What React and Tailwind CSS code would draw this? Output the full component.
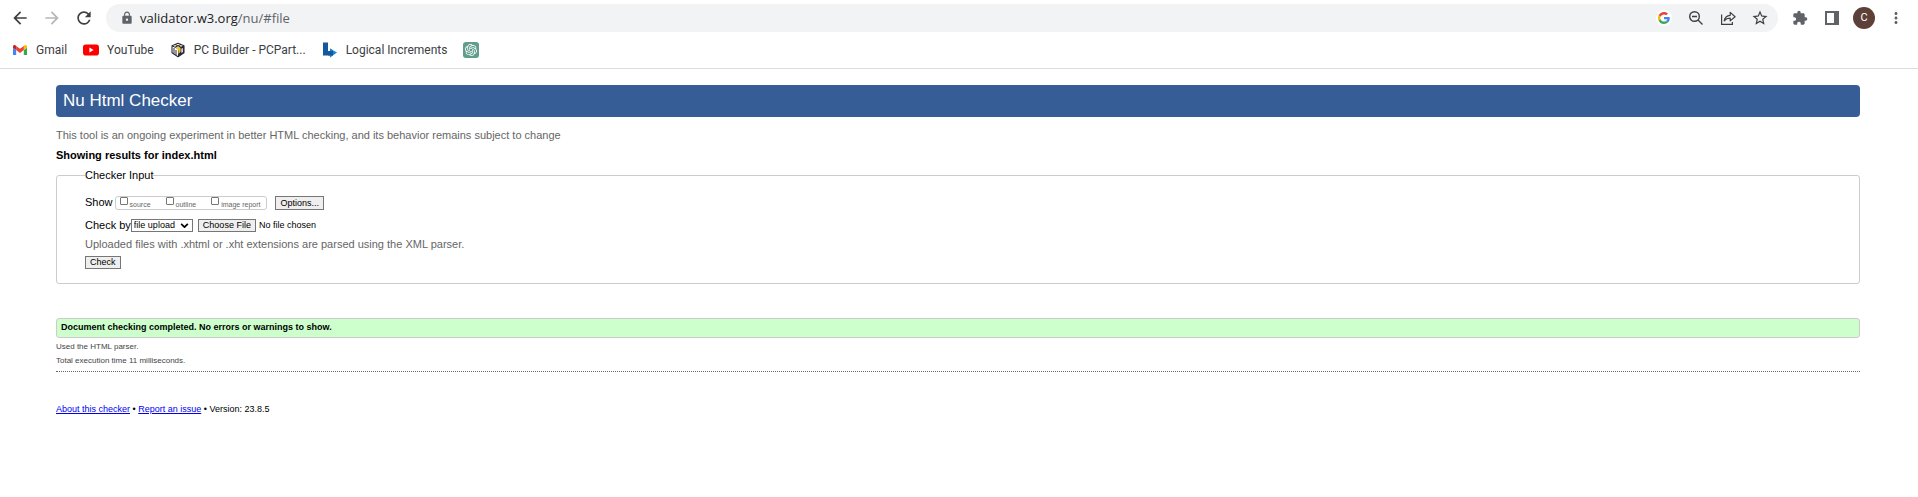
import { MdArrowBack, MdArrowForward, MdRefresh, MdLock, MdStarBorder, MdExtension, MdMoreVert } from "react-icons/md";
import { SiOpenai } from "react-icons/si";

function GoogleIcon() {
  return (
    <svg viewBox="0 0 48 48" className="size-3">
      <path fill="#EA4335" d="M24 9.5c3.54 0 6.71 1.22 9.21 3.6l6.85-6.85C35.9 2.38 30.47 0 24 0 14.62 0 6.51 5.38 2.56 13.22l7.98 6.19C12.43 13.72 17.74 9.5 24 9.5z" />
      <path fill="#4285F4" d="M46.98 24.55c0-1.57-.15-3.09-.38-4.55H24v9.02h12.94c-.58 2.96-2.26 5.48-4.78 7.18l7.73 6c4.51-4.18 7.09-10.36 7.09-17.65z" />
      <path fill="#FBBC05" d="M10.53 28.59c-.48-1.45-.76-2.99-.76-4.59s.27-3.14.76-4.59l-7.98-6.19C.92 16.46 0 20.12 0 24c0 3.88.92 7.54 2.56 10.78l7.97-6.19z" />
      <path fill="#34A853" d="M24 48c6.48 0 11.93-2.13 15.89-5.81l-7.73-6c-2.15 1.45-4.92 2.3-8.16 2.3-6.26 0-11.57-4.22-13.47-9.91l-7.98 6.19C6.51 42.62 14.62 48 24 48z" />
    </svg>
  );
}

function ZoomOutIcon() {
  return (
    <svg viewBox="0 0 16 16" className="size-4" fill="none" stroke="#3c4043" strokeWidth="1.4">
      <circle cx="6.5" cy="6.5" r="4.8" />
      <path d="M4 6.5h5M10 10l4.5 4.5" />
    </svg>
  );
}

function ShareIcon() {
  return (
    <svg viewBox="0 0 16 16" className="size-4" fill="none" stroke="#3c4043" strokeWidth="1.2">
      <path d="M1.6 4.5v9.9h10.8V12" />
      <path d="M4.2 10.8c.6-3.4 2.6-5.3 6-5.5V2.4l4.9 4.3-4.9 4.2V8.2c-2.5 0-4.5.8-6 2.6z" strokeLinejoin="round" />
    </svg>
  );
}

function SidePanelIcon() {
  return (
    <svg viewBox="0 0 14 14" className="size-3.5">
      <path fill="#5f6368" fillRule="evenodd" d="M0 0h14v14H0zM2 2v10h7V2z" />
    </svg>
  );
}

function GmailIcon() {
  return (
    <svg viewBox="52 42 88 66" className="w-3.5">
      <path fill="#4285f4" d="M58 108h14V74L52 59v43c0 3.32 2.69 6 6 6" />
      <path fill="#34a853" d="M120 108h14c3.32 0 6-2.69 6-6V59l-20 15" />
      <path fill="#fbbc04" d="M120 48v26l20-15v-8c0-7.42-8.47-11.65-14.4-7.2" />
      <path fill="#ea4335" d="M72 74V48l24 18 24-18v26L96 92" />
      <path fill="#c5221f" d="M52 51v8l20 15V48l-5.6-4.2c-5.94-4.45-14.4-.22-14.4 7.2" />
    </svg>
  );
}

function YouTubeIcon() {
  return (
    <svg viewBox="0 0 16 12" className="w-4">
      <rect y="0.5" width="16" height="11" rx="2.8" fill="#f00" />
      <path fill="#fff" d="M6.4 3.6v4.8L10.6 6z" />
    </svg>
  );
}

function PartsIcon() {
  return (
    <svg viewBox="0 0 16 16" className="size-4">
      <path d="M8 1.2l6 2.6v7L8 14.8l-6-4v-7z" fill="#fff" stroke="#2b2b38" strokeWidth="1.1" strokeLinejoin="round" />
      <path d="M8 6.6v8.2l6-4v-7z" fill="#2b2b38" />
      <path d="M2 3.8l6 2.8 6-2.8M5 2.5l6 2.7M11 2.5L5 5.2M4 6v5.5M6 8v5" fill="none" stroke="#2b2b38" />
      <path d="M5.2 5.8l3-1.3 2.4 1.4v3.6L8.4 12V8.200z" fill="#f2c12e" />
      <path d="M11.4 6.8l1.4-.7v4l-1.4.9z" fill="#fff" />
    </svg>
  );
}

function IncrementsIcon() {
  return (
    <svg viewBox="0 0 16 16" className="size-4">
      <path fill="#14599d" d="M1 .5h5V9h2V6.5l3 1.700v4.300L8 15.500v-2H1z" />
      <path fill="#1d87d6" d="M8 6.500l7 4-7 5z" />
      <path fill="#14599d" d="M6 9h5v4.500H6z" />
    </svg>
  );
}

function ToolButton({ label, children }) {
  return (
    <button type="button" aria-label={label} className="flex h-7 w-8 items-center justify-center">
      {children}
    </button>
  );
}

function Bookmark({ icon, children, label }) {
  return (
    <a href="#bookmark" aria-label={label} className="flex items-center gap-2">
      <span className="flex size-4 items-center justify-center">{icon}</span>
      {children}
    </a>
  );
}

function ShowOption({ children }) {
  return (
    <label className="flex h-3 items-start gap-0.5">
      <input type="checkbox" className="size-2 appearance-none rounded-[1px] border border-[#767676] bg-white checked:bg-blue-600" />
      <span className="self-end text-[7px] leading-[8px] text-[#666]">{children}</span>
    </label>
  );
}

const buttonClass = "border border-[#767676] bg-[#efefef] px-1 text-[9px] text-black";

export default function App() {
  return (
    <div className="bg-white font-['Liberation_Sans',Arial,sans-serif] text-[11px] leading-4 text-black">
      <header className="border-b border-[#dadce0] font-['Open_Sans','Noto_Sans',sans-serif]">
        <div className="flex items-center pt-1 pr-1.5 pl-1">
          <nav aria-label="History" className="flex">
            <ToolButton label="Back"><MdArrowBack className="size-5 text-[#3c4043]" /></ToolButton>
            <ToolButton label="Forward"><MdArrowForward className="size-5 text-[#b4b6b9]" /></ToolButton>
            <ToolButton label="Reload"><MdRefresh className="size-5 text-[#3c4043]" /></ToolButton>
          </nav>
          <div className="ml-1.5 flex h-7 flex-1 items-center rounded-full bg-[#f1f3f4] pr-0.5 pl-3.5">
            <MdLock className="mr-1.5 size-3.5 text-[#5f6368]" />
            <p className="flex-1 text-[13px] text-[#5f6368]"><span className="text-[#202124]">validator.w3.org</span>/nu/#file</p>
            <ToolButton label="Search with Google">
              <span className="flex size-4 items-center justify-center rounded-full bg-white"><GoogleIcon /></span>
            </ToolButton>
            <ToolButton label="Zoom"><ZoomOutIcon /></ToolButton>
            <ToolButton label="Share"><ShareIcon /></ToolButton>
            <ToolButton label="Bookmark this page"><MdStarBorder className="size-[18px] text-[#3c4043]" /></ToolButton>
          </div>
          <div className="ml-1.5 flex">
            <ToolButton label="Extensions"><MdExtension className="size-4 text-[#5f6368]" /></ToolButton>
            <ToolButton label="Side panel"><SidePanelIcon /></ToolButton>
            <ToolButton label="Profile">
              <span className="flex size-[22px] items-center justify-center rounded-full bg-[#5d4037] font-[Roboto,sans-serif] text-[11px] text-white">C</span>
            </ToolButton>
            <ToolButton label="Menu"><MdMoreVert className="size-[18px] text-[#5f6368]" /></ToolButton>
          </div>
        </div>
        <nav aria-label="Bookmarks" className="flex h-9 items-center gap-4 px-3 font-[Roboto,sans-serif] text-[12px] text-[#3c4043]">
          <Bookmark icon={<GmailIcon />}>Gmail</Bookmark>
          <Bookmark icon={<YouTubeIcon />}>YouTube</Bookmark>
          <Bookmark icon={<PartsIcon />}>PC Builder - PCPart...</Bookmark>
          <Bookmark icon={<IncrementsIcon />}>Logical Increments</Bookmark>
          <Bookmark
            label="ChatGPT"
            icon={<span className="flex size-4 items-center justify-center rounded-[3px] bg-[#5f9e8c]"><SiOpenai className="size-3 text-white" /></span>}
          />
        </nav>
      </header>

      <main className="pt-4 pr-[58px] pl-14">
        <h1 className="rounded bg-[#365d95] px-[7px] text-[17px] leading-8 text-white">Nu Html Checker</h1>
        <p className="mt-2.5 text-[#666]">This tool is an ongoing experiment in better HTML checking, and its behavior remains subject to change</p>
        <h2 className="mt-1 font-bold">Showing results for index.html</h2>

        <form>
          <fieldset className="mt-1 rounded-[3px] border border-[#ccc] px-7 pb-3.5">
            <legend>Checker Input</legend>
            <div className="mt-[13px] flex h-3.5 items-start leading-3">
              <span>Show</span>
              <div className="ml-0.5 flex h-3.5 items-center gap-[15px] rounded-[3px] border border-[#ccc] pr-1.5 pl-1">
                <ShowOption>source</ShowOption>
                <ShowOption>outline</ShowOption>
                <ShowOption>image report</ShowOption>
              </div>
              <button type="button" className={`${buttonClass} ml-2 h-3.5 leading-3`}>Options...</button>
            </div>
            <div className="mt-[9px] flex h-3.5 items-start leading-3">
              <label htmlFor="docselect">Check by</label>
              <span className="relative flex">
                <select id="docselect" className="h-[13px] w-[62px] appearance-none border border-[#767676] bg-white pl-0.5 text-[9px] leading-[11px]">
                  <option>file upload</option>
                  <option>address</option>
                  <option>text input</option>
                </select>
                <svg viewBox="0 0 10 6" className="pointer-events-none absolute top-1 right-1 h-[5px] w-[9px]" fill="none" stroke="#000" strokeWidth="2">
                  <path d="M1 1l4 4 4-4" />
                </svg>
              </span>
              <input
                type="file"
                aria-label="File to check"
                className="ml-[5px] h-[13px] text-[9px] leading-[11px] file:mr-[3px] file:h-[13px] file:border file:border-solid file:border-[#767676] file:bg-[#efefef] file:px-1 file:text-[9px] file:leading-[11px] file:text-black"
              />
            </div>
            <p className="mt-[3px] text-[#666]">Uploaded files with .xhtml or .xht extensions are parsed using the XML parser.</p>
            <button type="button" className={`${buttonClass} mt-1 block h-[13px] leading-[11px]`}>Check</button>
          </fieldset>
        </form>

        <p className="mt-[34px] rounded-[3px] border border-[#ccc] bg-[#cfc] px-1 pb-0.5 text-[9px] leading-4 font-bold">
          Document checking completed. No errors or warnings to show.
        </p>
        <div className="mt-0.5 border-b border-dotted border-[#666] pb-[3px] text-[8px] leading-[14px] text-[#444]">
          <p>Used the HTML parser.</p>
          <p>Total execution time 11 milliseconds.</p>
        </div>
        <footer className="mt-[29px] text-[9px]">
          <a href="#about" className="text-[#00e] underline">About this checker</a> • <a href="#issue" className="text-[#00e] underline">Report an issue</a> • Version: 23.8.5
        </footer>
      </main>
    </div>
  );
}
